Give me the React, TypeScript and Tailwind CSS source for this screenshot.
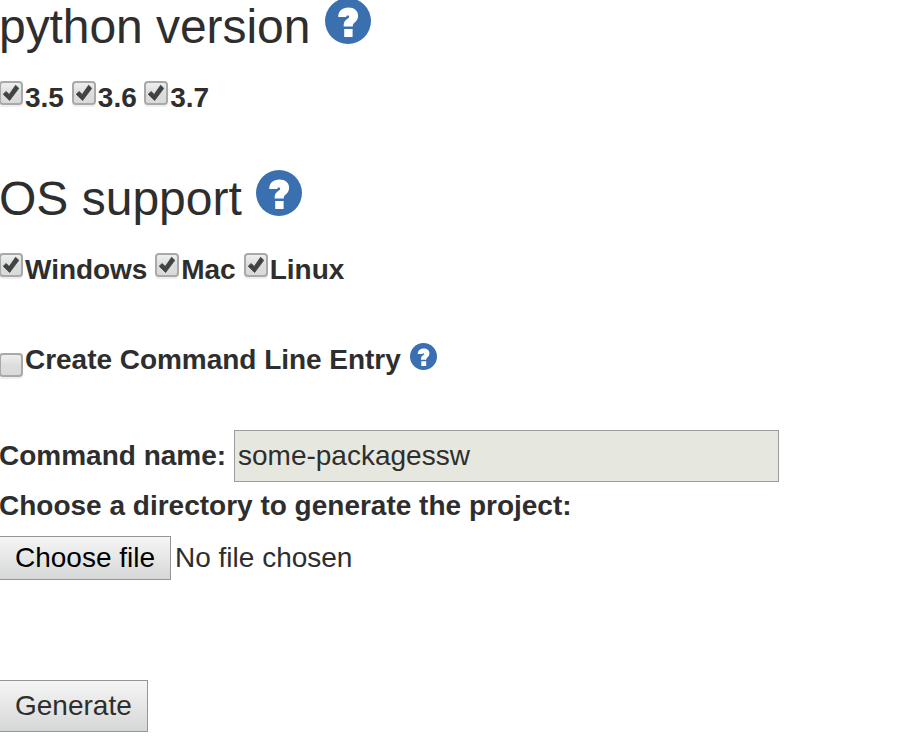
import React from "react";

function HelpIcon({ className }: { className: string }) {
  return (
    <svg viewBox="0 0 46 46" className={`shrink-0 ${className}`} aria-label="Help">
      <circle cx="23" cy="23" r="23" fill="#3b70b0" />
      <path
        fill="#fff"
        d="M13.200 18.900C13.300 13 17.200 9.500 23.400 9.500c5.800 0 9.700 3.200 9.700 8.100 0 3.500-1.500 5.600-3.700 7.200-1.200 1-1.600 1.900-1.600 3.700h-9.100c0-3.900.7-5.600 3.500-7.600 1.500-1 2-1.400 2-2.200 0-.7-.6-1.100-1.300-1.100-1 0-1.500.4-1.700 1.300zM19.200 30.900h8.400v8.200h-8.400z"
      />
    </svg>
  );
}

function Checkbox({ checked = false, className = "" }: { checked?: boolean; className?: string }) {
  return (
    <span
      role="checkbox"
      aria-checked={checked}
      className={`mr-[2px] block size-6 shrink-0 rounded-[4px] border-2 border-[#a9a9a9] bg-linear-to-b from-[#eeeeee] via-[#dcdedd] to-[#d9dbda] shadow-[0_2px_1px_#eeeeee] ${className}`}
    >
      {checked && (
        <svg viewBox="0 0 20 20" className="size-5">
          <path
            d="M2.200 11.200L5.200 8.500l3 3L14.600 2.300l3.200 3L8.600 17.500z"
            fill="#404342"
            stroke="#404342"
            strokeWidth="0.8"
          />
        </svg>
      )}
    </span>
  );
}

function Option({ label, className }: { label: string; className: string }) {
  return (
    <label className={`flex h-[34px] items-start font-bold ${className}`}>
      <Checkbox checked />
      <span className="pt-px tracking-[-0.03px]">{label}</span>
    </label>
  );
}

export default function App() {
  return (
    <main className="flex h-[745px] w-[898px] flex-col overflow-hidden bg-white font-['Liberation_Sans',Arial,sans-serif] text-[28px] leading-8 whitespace-nowrap text-[#2e2e2e]">
      <h2 className="-ml-px flex h-[52px] items-start text-[48px] leading-[52px]">
        <span className="pt-px tracking-[-0.06px]">python version</span>
        <HelpIcon className="-mt-[2px] ml-[15px] size-[46px]" />
      </h2>
      <div className="mt-[29px] flex">
        <Option label="3.5" className="-ml-px" />
        <Option label="3.6" className="ml-2" />
        <Option label="3.7" className="ml-[7.6px]" />
      </div>
      <h2 className="mt-[57px] -ml-px flex h-[52px] items-start text-[48px] leading-[52px]">
        <span className="pt-px">OS support</span>
        <HelpIcon className="-mt-[2px] ml-[14px] size-[46px]" />
      </h2>
      <div className="mt-[29px] flex">
        <Option label="Windows" className="-ml-px" />
        <Option label="Mac" className="ml-[7.75px]" />
        <Option label="Linux" className="ml-[8.2px]" />
      </div>
      <div className="mt-[56px] -ml-px flex h-[34px] items-start font-bold">
        <Checkbox className="mt-[10px]" />
        <span className="pt-px tracking-[-0.03px]">Create Command Line Entry</span>
        <HelpIcon className="ml-[9px] size-[27px]" />
      </div>
      <div className="mt-[53px] flex h-[52px] items-center">
        <label className="-ml-px w-[235px] font-bold">Command name:</label>
        <div className="flex h-[52px] w-[545px] items-center border border-[#9b9d9b] bg-[#e6e8df] pl-[3px]">
          some-packagessw
        </div>
      </div>
      <div className="mt-2 -ml-px font-bold">Choose a directory to generate the project:</div>
      <div className="mt-[14px] flex h-11 items-center">
        <button className="h-11 w-[171px] border border-l-0 border-[#969696] bg-linear-to-b from-[#f5f5f5] to-[#d6d8d7] pl-[15px] text-left text-black">
          Choose file
        </button>
        <span className="ml-1">No file chosen</span>
      </div>
      <button className="mt-[100px] h-[52px] w-[148px] border border-l-0 border-[#969696] bg-linear-to-b from-[#f5f5f5] to-[#d6d8d7] pl-[15px] text-left">
        Generate
      </button>
    </main>
  );
}
